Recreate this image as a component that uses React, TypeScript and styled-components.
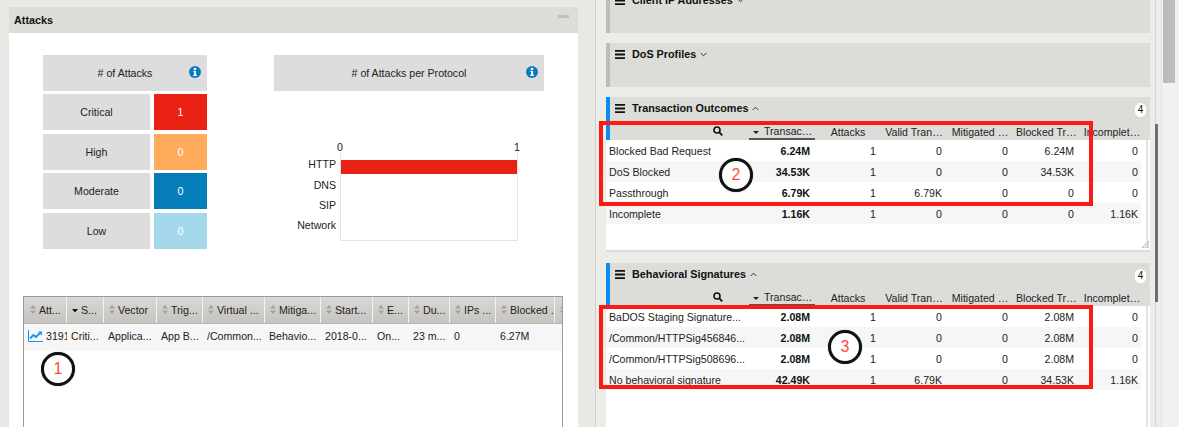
import {Fragment} from 'react'
import styled, {createGlobalStyle} from 'styled-components'

const Global = createGlobalStyle`
	html, body {
		margin: 0;
		padding: 0;
		overflow: hidden;
	}
	body {
		font-family: "Liberation Sans", Arial, sans-serif;
		font-size: 10.6px;
		color: #222;
	}
`

const Page = styled.div`
	position: relative;
	width: 1179px;
	height: 427px;
	overflow: hidden;
	display: flex;
	background: #e9e8e4;
`

/* left side */
const LeftPane = styled.div`
	width: 596px;
	flex: none;
	padding: 7px 17px 0 9px;
	box-sizing: border-box;
	border-right: 1px solid #cfcfcb;
`

const AttacksHead = styled.div`
	height: 26px;
	background: #dcddd8;
	display: flex;
	align-items: center;
	justify-content: space-between;
	padding: 0 9px 0 5px;
	font-size: 10.8px;
	font-weight: bold;
	color: #111;
`

const Minimize = styled.span`
	width: 11px;
	height: 3px;
	background: #c0c1bc;
	margin-bottom: 7px;
`

const AttacksBody = styled.div`
	background: #fff;
	height: 394px;
	padding: 22px 15px 0 14px;
	box-sizing: border-box;
`

const Summary = styled.div`
	display: flex;
	padding-left: 20px;
	gap: 67px;
`

const Tiles = styled.div`
	width: 164px;
	display: grid;
	grid-template-columns: 107px 53px;
	column-gap: 4px;
	grid-auto-rows: 36px;
	row-gap: 3.45px;
`

const Tile = styled.div`
	background: #dddddd;
	display: flex;
	align-items: center;
	justify-content: center;
	color: #222;
`

const HeadTile = styled(Tile)`
	position: relative;
	grid-column: 1 / -1;
	height: 36px;
`

const ValueTile = styled(Tile)<{$bg: string}>`
	background: ${({$bg}) => $bg};
	color: #fff;
`

const InfoWrap = styled.span`
	position: absolute;
	right: 6px;
	top: 11px;
	display: flex;
`

const ProtocolCol = styled.div`
	width: 270px;
`

const Chart = styled.svg`
	display: block;
	margin-top: 52px;
	overflow: visible;

	text {
		font-family: "Liberation Sans", Arial, sans-serif;
		font-size: 10.6px;
		fill: #222;
	}
`

const AttackTable = styled.div`
	margin-top: 47px;
	width: 540px;
	height: 140px;
	border: 1px solid #9a9a9a;
	border-bottom: 0;
	box-sizing: border-box;
	overflow: hidden;
`

const AttackHeader = styled.div`
	display: flex;
	height: 26px;
	border-bottom: 1px solid #b5b5b5;
`

const AttackHeadCell = styled.div<{$w: number}>`
	width: ${({$w}) => $w}px;
	flex: none;
	box-sizing: border-box;
	display: flex;
	align-items: center;
	gap: 3px;
	padding-left: 5px;
	background: linear-gradient(#dbd9d5, #c5c3bf);
	border-right: 1px solid #f2f2f2;
	white-space: nowrap;
	overflow: hidden;
	color: #222;

	&:first-child {
		padding-left: 6px;
	}
`

const SortMark = styled.span`
	flex: none;
	display: flex;
`

const AttackRow = styled.div`
	display: flex;
	height: 27px;
	align-items: center;
	background: #f6f6f6;
	color: #222;
`

const AttackCell = styled.div<{$w: number}>`
	width: ${({$w}) => $w}px;
	flex: none;
	box-sizing: border-box;
	padding-left: 4px;
	display: flex;
	align-items: center;
	gap: 3px;
	white-space: nowrap;
	overflow: hidden;
	margin-top: -3px;

	svg {
		flex: none;
	}
`

/* right side */
const RightPane = styled.div`
	flex: 1;
	background: #ebede8;
	display: flex;
	min-width: 0;
`

const PanelList = styled.div`
	width: 544px;
	margin-left: 10px;
	margin-top: -11px;
	flex: none;
	display: flex;
	flex-direction: column;
	gap: 10px;
`

const Panel = styled.section`
	background: #fff;
	flex: none;
	height: 170px;
	display: flex;
	flex-direction: column;
`

const FirstPanel = styled(Panel)`
	height: 155px;
	margin-bottom: 1px;
	border-bottom: 2px solid #dcdcdc;
	box-sizing: border-box;
`

const CollapsedPanel = styled.section`
	height: 44px;
	flex: none;
	background: #dcddd8;
	border-left: 4px solid #bcbdb9;
	box-sizing: border-box;
`

const PanelHead = styled.div`
	height: 22px;
	display: flex;
	align-items: center;
	gap: 7px;
	padding-left: 5px;
	padding-right: 4px;
	font-size: 10.8px;
	font-weight: bold;
	color: #111;
	background: #dcddd8;
`

const OpenHead = styled.div`
	flex: none;
	background: #dcddd8;
	border-left: 4px solid #0b8cf5;
`

const Caret = styled.span`
	display: flex;
	margin-left: -3px;
`

const Badge = styled.span`
	margin-left: auto;
	margin-top: 3px;
	width: 11px;
	height: 14px;
	border-radius: 7px;
	background: #fff;
	font-size: 10px;
	font-weight: normal;
	display: flex;
	align-items: center;
	justify-content: center;
`

const ColHead = styled.div`
	display: grid;
	grid-template-columns: 139px repeat(6, 66px);
	height: 21px;
	box-sizing: border-box;
	padding-top: 4px;
	align-items: center;
	color: #222;
`

const SearchCell = styled.div`
	display: flex;
	justify-content: flex-end;
	padding-right: 26px;
	padding-bottom: 1px;
`

const HeadLabel = styled.div<{$sorted?: boolean}>`
	text-align: center;
	white-space: nowrap;
	overflow: hidden;
	padding: 0 3px;
	line-height: 14px;
	${({$sorted}) =>
		$sorted &&
		'border-bottom: 2px solid #555; padding: 0 0 0 15px; position: relative; margin-top: 1px; text-align: left;'}
`

const SortArrow = styled.span`
	position: absolute;
	left: 4px;
	top: 7px;
	width: 0;
	height: 0;
	border-left: 3px solid transparent;
	border-right: 3px solid transparent;
	border-top: 3px solid #222;
`

const BodyWrap = styled.div`
	display: flex;
	position: relative;
	flex: 1;
`

const Rows = styled.div`
	width: 535px;
	flex: none;
`

const Row = styled.div`
	display: grid;
	grid-template-columns: 143px repeat(5, 66px) 62px;
	height: 21px;
	align-items: center;

	&:nth-child(even) {
		background: #f6f6f6;
	}
`

const NameCell = styled.div`
	padding-left: 3px;
	white-space: nowrap;
	overflow: hidden;
	color: #222;
`

const NumCell = styled.div<{$bold?: boolean}>`
	text-align: right;
	padding-right: 5px;
	color: #222;
	${({$bold}) => $bold && 'font-weight: bold; color: #111;'}

	&:last-child {
		padding-right: 3px;
	}
`

const RowsEdge = styled.div`
	position: absolute;
	left: 540px;
	top: 0;
	bottom: 4px;
	width: 2px;
	background: #e2e2e2;
`

const Grip = styled.svg`
	position: absolute;
	left: 536px;
	bottom: 2px;
`

const SideTrack = styled.div`
	width: 5px;
	margin-left: 5px;
	flex: none;
	display: flex;
	flex-direction: column;
	border-left: 1px solid #d5d6d1;
	box-sizing: border-box;
`

const SideThumb = styled.div`
	width: 3px;
	height: 178px;
	margin-top: 124px;
	margin-left: -1px;
	background: #6f6f6f;
`

const PageScrollbar = styled.div`
	width: 18px;
	margin-left: 1px;
	flex: none;
	background: #f1f1f1;
	border-left: 1px solid #e2e2e2;
	box-sizing: border-box;
	padding-left: 1px;
`

const PageThumb = styled.div`
	width: 12px;
	height: 83px;
	background: #bcbcbc;
`

/* things drawn over the screenshot */
const RedBox = styled.div<{$top: number; $h: number}>`
	position: absolute;
	left: 599px;
	top: ${({$top}) => $top}px;
	width: 494px;
	height: ${({$h}) => $h}px;
	border: 4px solid #fb1a14;
	box-sizing: border-box;
	pointer-events: none;
`

const Marker = styled.div<{$x: number; $y: number}>`
	position: absolute;
	left: ${({$x}) => $x}px;
	top: ${({$y}) => $y}px;
	width: 34px;
	height: 34px;
	border: 3px solid #111;
	border-radius: 50%;
	box-sizing: border-box;
	box-shadow: 0 0 1px #666;
	background: #fff;
	color: #ff4a3a;
	font-size: 16px;
	display: flex;
	align-items: center;
	justify-content: center;
`

function InfoIcon() {
	return (
		<svg width="12" height="12" viewBox="0 0 13 13">
			<circle cx="6.5" cy="6.5" r="6.5" fill="#0a7cc4" />
			<circle cx="6.5" cy="3.3" r="1.4" fill="#fff" />
			<path d="M4.8 5.4h2.8v4.2h1v1.2H4.6V9.6h1V6.6h-.8z" fill="#fff" />
		</svg>
	)
}

function Sort({active}: {active?: boolean}) {
	if (active) {
		return (
			<SortMark>
				<svg width="6" height="8" viewBox="0 0 6 8">
					<path d="M0 3h6L3 6.500z" fill="#111" />
				</svg>
			</SortMark>
		)
	}
	return (
		<SortMark>
			<svg width="6" height="9" viewBox="0 0 6 9">
				<path d="M3 0l3 3.600H0zM3 9L0 5.400h6z" fill="#a3a19d" />
			</svg>
		</SortMark>
	)
}

function Burger() {
	return (
		<svg width="10" height="9" viewBox="0 0 10 9">
			<path d="M0 0h10v1.800H0zM0 3.600h10v1.800H0zM0 7.200h10V9H0z" fill="#111" />
		</svg>
	)
}

function Chevron({up}: {up?: boolean}) {
	return (
		<Caret>
			<svg width="7" height="5" viewBox="0 0 7 5">
				<path d={up ? 'M.7 4l2.800-2.800L6.300 4' : 'M.7 1l2.800 2.800L6.300 1'} fill="none" stroke="#333" strokeWidth="1" />
			</svg>
		</Caret>
	)
}

function SearchIcon() {
	return (
		<svg width="10" height="10" viewBox="0 0 10 10">
			<circle cx="4" cy="4" r="3" fill="none" stroke="#111" strokeWidth="1.600" />
			<path d="M6.300 6.300L9.300 9.300" stroke="#111" strokeWidth="1.900" />
		</svg>
	)
}

function TrendIcon() {
	return (
		<svg width="15" height="12" viewBox="0 0 15 12">
			<path d="M.5 0v11.500H15" fill="none" stroke="#1e90e8" strokeWidth="1" />
			<path d="M2 8.500l3.500-3.500 2.500 2L12 3" fill="none" stroke="#1e90e8" strokeWidth="1.800" />
			<path d="M10 1.500h4v4z" fill="#1e90e8" />
		</svg>
	)
}

function ProtocolChart() {
	return (
		<Chart width="270" height="100" viewBox="274 143 270 100">
			<text x="340" y="151" textAnchor="middle">0</text>
			<text x="517" y="151" textAnchor="middle">1</text>
			<path d="M340.500 153v87.500h177V153" fill="none" stroke="#e3e3e3" />
			<rect x="341" y="160" width="176" height="14" fill="#e82113" />
			<text x="336" y="168" textAnchor="end">HTTP</text>
			<text x="336" y="189" textAnchor="end">DNS</text>
			<text x="336" y="209" textAnchor="end">SIP</text>
			<text x="336" y="229" textAnchor="end">Network</text>
		</Chart>
	)
}

const severity = [
	{label: 'Critical', value: '1', bg: '#e82113'},
	{label: 'High', value: '0', bg: '#ffab5c'},
	{label: 'Moderate', value: '0', bg: '#057db8'},
	{label: 'Low', value: '0', bg: '#a5d8ea'},
]

const attackCols = [
	{title: 'Att...', w: 43, value: '319136'},
	{title: 'S...', w: 37, value: 'Criti...', active: true},
	{title: 'Vector', w: 53, value: 'Applica...'},
	{title: 'Trig...', w: 46, value: 'App B...'},
	{title: 'Virtual ...', w: 62, value: '/Common...'},
	{title: 'Mitiga...', w: 56, value: 'Behavio...'},
	{title: 'Start...', w: 52, value: '2018-0...'},
	{title: 'E...', w: 36, value: 'On...'},
	{title: 'Du...', w: 41, value: '23 m...'},
	{title: 'IPs ...', w: 46, value: '0'},
	{title: 'Blocked ..', w: 59, value: '6.27M'},
	{title: '', w: 8, value: ''},
]

const outcomes = [
	['Blocked Bad Request', '6.24M', '1', '0', '0', '6.24M', '0'],
	['DoS Blocked', '34.53K', '1', '0', '0', '34.53K', '0'],
	['Passthrough', '6.79K', '1', '6.79K', '0', '0', '0'],
	['Incomplete', '1.16K', '1', '0', '0', '0', '1.16K'],
]

const signatures = [
	['BaDOS Staging Signature...', '2.08M', '1', '0', '0', '2.08M', '0'],
	['/Common/HTTPSig456846...', '2.08M', '1', '0', '0', '2.08M', '0'],
	['/Common/HTTPSig508696...', '2.08M', '1', '0', '0', '2.08M', '0'],
	['No behavioral signature', '42.49K', '1', '6.79K', '0', '34.53K', '1.16K'],
]

function StatsHead({title}: {title: string}) {
	return (
		<OpenHead>
			<PanelHead>
				<Burger />
				{title}
				<Chevron up />
				<Badge>4</Badge>
			</PanelHead>
			<ColHead>
				<SearchCell>
					<SearchIcon />
				</SearchCell>
				<HeadLabel $sorted>
					<SortArrow />
					Transac…
				</HeadLabel>
				<HeadLabel>Attacks</HeadLabel>
				<HeadLabel>Valid Tran…</HeadLabel>
				<HeadLabel>Mitigated …</HeadLabel>
				<HeadLabel>Blocked Tr…</HeadLabel>
				<HeadLabel>Incomplet…</HeadLabel>
			</ColHead>
		</OpenHead>
	)
}

function StatsRows({rows}: {rows: string[][]}) {
	return (
		<Rows>
			{rows.map((row) => (
				<Row key={row[0]}>
					<NameCell>{row[0]}</NameCell>
					{row.slice(1).map((cell, i) => (
						<NumCell key={i} $bold={i === 0}>
							{cell}
						</NumCell>
					))}
				</Row>
			))}
		</Rows>
	)
}

export default function App() {
	return (
		<Page>
			<Global />
			<LeftPane>
				<AttacksHead>
					Attacks
					<Minimize />
				</AttacksHead>
				<AttacksBody>
					<Summary>
						<Tiles>
							<HeadTile>
								# of Attacks
								<InfoWrap>
									<InfoIcon />
								</InfoWrap>
							</HeadTile>
							{severity.map((s) => (
								<Fragment key={s.label}>
									<Tile>{s.label}</Tile>
									<ValueTile $bg={s.bg}>{s.value}</ValueTile>
								</Fragment>
							))}
						</Tiles>
						<ProtocolCol>
							<HeadTile>
								# of Attacks per Protocol
								<InfoWrap>
									<InfoIcon />
								</InfoWrap>
							</HeadTile>
							<ProtocolChart />
						</ProtocolCol>
					</Summary>
					<AttackTable>
						<AttackHeader>
							{attackCols.map((col) => (
								<AttackHeadCell key={col.w + col.title} $w={col.w}>
									<Sort active={col.active} />
									{col.title}
								</AttackHeadCell>
							))}
						</AttackHeader>
						<AttackRow>
							{attackCols.map((col, i) => (
								<AttackCell key={col.w + col.title} $w={col.w}>
									{i === 0 && <TrendIcon />}
									{col.value}
								</AttackCell>
							))}
						</AttackRow>
					</AttackTable>
				</AttacksBody>
			</LeftPane>
			<RightPane>
				<PanelList>
					<CollapsedPanel>
						<PanelHead>
							<Burger />
							Client IP Addresses
							<Chevron />
						</PanelHead>
					</CollapsedPanel>
					<CollapsedPanel>
						<PanelHead>
							<Burger />
							DoS Profiles
							<Chevron />
						</PanelHead>
					</CollapsedPanel>
					<FirstPanel>
						<StatsHead title="Transaction Outcomes" />
						<BodyWrap>
							<StatsRows rows={outcomes} />
							<RowsEdge />
							<Grip width="7" height="7" viewBox="0 0 7 7">
								<path d="M5 0h2v2H5zM2.500 2.500h2v2h-2zM5 2.500h2v2H5zM0 5h2v2H0zM2.500 5h2v2h-2zM5 5h2v2H5z" fill="#c9c9c9" />
							</Grip>
						</BodyWrap>
					</FirstPanel>
					<Panel>
						<StatsHead title="Behavioral Signatures" />
						<BodyWrap>
							<StatsRows rows={signatures} />
							<RowsEdge />
						</BodyWrap>
					</Panel>
				</PanelList>
				<SideTrack>
					<SideThumb />
				</SideTrack>
				<PageScrollbar>
					<PageThumb />
				</PageScrollbar>
			</RightPane>
			<RedBox $top={121} $h={85} />
			<RedBox $top={305} $h={84} />
			<Marker $x={41} $y={352}>1</Marker>
			<Marker $x={719} $y={158}>2</Marker>
			<Marker $x={828} $y={330}>3</Marker>
		</Page>
	)
}
